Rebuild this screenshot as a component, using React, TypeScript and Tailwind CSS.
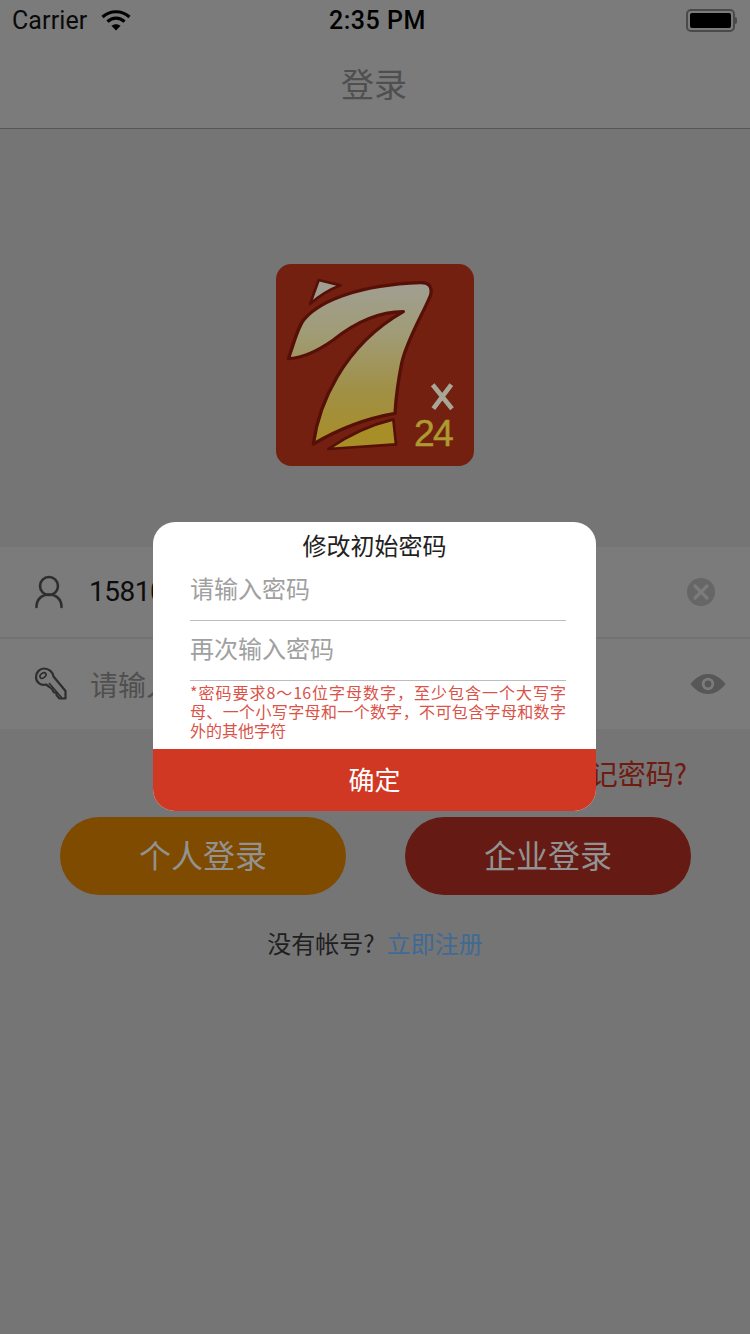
import React from "react";

const cjk = '"Noto Sans CJK SC", "Noto Sans", sans-serif';

function Logo() {
  return (
    <svg viewBox="48 42 594 606" className="w-[198px] h-[202px] block">
      <defs>
        <linearGradient id="seven" x1="0" y1="0" x2="0" y2="1">
          <stop offset="0" stopColor="#a09e92" />
          <stop offset="0.3" stopColor="#a09c78" />
          <stop offset="0.65" stopColor="#a09048" />
          <stop offset="1" stopColor="#a88e26" />
        </linearGradient>
      </defs>
      <rect x="48" y="42" width="594" height="606" rx="46" fill="#732010" />
      <path
        d="M85 326 C105 270 115 225 135 205 C185 150 300 105 480 98 C505 97 518 108 512 135 C490 190 440 270 425 340 C415 390 408 440 405 490 C320 505 230 540 160 582 C175 470 245 290 430 185 C340 185 270 230 220 270 C170 305 125 325 85 326 Z"
        fill="url(#seven)"
        stroke="#571008"
        strokeWidth="10"
        strokeLinejoin="round"
      />
      <path d="M176 90 L242 106 C205 120 175 140 150 162 Z" fill="#a09e92" stroke="#571008" strokeWidth="8" strokeLinejoin="round" />
      <path d="M400 508 C330 525 265 555 205 597 L408 583 Z" fill="#a88e26" stroke="#571008" strokeWidth="8" strokeLinejoin="round" />
      <path d="M518 404 L576 476 M574 404 L520 476" stroke="#a8a696" strokeWidth="14" fill="none" />
      <text x="462" y="589" fontFamily='"Liberation Sans", sans-serif' fontSize="112" letterSpacing="-5" stroke="#ad9a30" strokeWidth="1.5" fill="#ad9a30">24</text>
    </svg>
  );
}

function UserIcon() {
  return (
    <svg viewBox="0 0 30 34" className="w-[30px] h-[34px]" fill="none" stroke="#2e2e2e" strokeWidth="2.6" strokeLinecap="round">
      <circle cx="15" cy="11" r="9" />
      <path d="M2.5 32 C2.5 24 8 19.5 15 19.5 C22 19.5 27.5 24 27.5 32" />
    </svg>
  );
}

function KeyIcon() {
  return (
    <svg viewBox="0 0 34 34" className="w-[34px] h-[34px]" fill="none" stroke="#2e2e2e" strokeWidth="2.2" strokeLinejoin="round">
      <path d="M3 10 C3 5 7 1.5 11 1.5 C16 1.5 20 5 20.5 9.5 L32.5 24 L32.5 31.5 L26.5 31.5 L23.5 28 L23.5 25.5 L21 25.5 L19 22 L16.5 20 L13 17.5 C8 19 3 15.5 3 10 Z" />
      <ellipse cx="10" cy="8.5" rx="3.4" ry="2.2" transform="rotate(-35 10 8.5)" strokeWidth="1.6" />
      <path d="M16 16 L29 31" strokeWidth="1.6" />
    </svg>
  );
}

function ClearIcon() {
  return (
    <svg viewBox="0 0 28 28" className="w-7 h-7">
      <circle cx="14" cy="14" r="14" fill="#666666" />
      <path d="M8 8 L20 20 M20 8 L8 20" stroke="#7b7b7b" strokeWidth="3.2" strokeLinecap="round" />
    </svg>
  );
}

function EyeIcon() {
  return (
    <svg viewBox="0 0 36 20" className="w-9 h-5">
      <path d="M0.5 10 C6 3 12 0 18 0 C24 0 30 3 35.5 10 C30 17 24 20 18 20 C12 20 6 17 0.5 10 Z" fill="#575757" />
      <circle cx="18" cy="10" r="6.2" fill="#7b7b7b" />
      <circle cx="18" cy="10" r="3.4" fill="#575757" />
    </svg>
  );
}

function WifiIcon() {
  return (
    <svg viewBox="0 0 30 22" className="w-[30px] h-[22px]" fill="none" stroke="#000" strokeWidth="3.2">
      <path d="M1.5 8 C9 1 21 1 28.5 8" />
      <path d="M6.5 12.6 C11.5 8 18.5 8 23.5 12.6" />
      <path d="M15 21.5 L10.4 16.8 C13 14.6 17 14.6 19.6 16.8 Z" fill="#000" stroke="none" />
    </svg>
  );
}

function Battery() {
  return (
    <div className="flex items-center">
      <div className="w-[49px] h-[23px] rounded-[5px] border-2 border-[#4a4a4a] p-[2px]">
        <div className="w-full h-full rounded-[2px] bg-black" />
      </div>
      <div className="w-[2px] h-[7px] bg-[#4a4a4a] rounded-r-sm" />
    </div>
  );
}

export default function App() {
  return (
    <div className="relative w-[750px] h-[1334px] overflow-hidden bg-[#757575]" style={{ fontFamily: cjk }}>
      <header className="bg-[#7b7b7b] border-b border-[#555555]">
        <div className="relative h-10 flex items-center justify-between pl-3 pr-[13px] text-black">
          <div className="flex items-center gap-[14px]">
            <span className="text-[25px] leading-none font-['Roboto'] text-[#0a0a0a] tracking-[0.1px]">Carrier</span>
            <WifiIcon />
          </div>
          <span className="absolute left-[329px] top-[8px] text-[25px] leading-none font-['Roboto'] font-medium tracking-[0.5px]">2:35 PM</span>
          <Battery />
        </div>
        <div className="h-[88px] flex items-center justify-center pb-[1px] pr-[2px]">
          <span className="text-[33px] leading-none text-[#4f4f4f]">登录</span>
        </div>
      </header>

      <main>
        <div className="flex justify-center pt-[135px] pb-[81px]">
          <Logo />
        </div>

        <section className="bg-[#7b7b7b]">
          <div className="h-[92px] flex items-center pl-[34px] pr-[35px] border-b-2 border-[#727272]">
            <UserIcon />
            <span className="ml-[25px] text-[28px] tracking-[-0.5px] leading-none text-[#0c0c0c] font-['Roboto']">15810000000</span>
            <div className="ml-auto"><ClearIcon /></div>
          </div>
          <div className="h-[90px] flex items-center pl-[33px] pr-[24px]">
            <KeyIcon />
            <span className="ml-[23px] text-[28px] leading-none text-[#4f4f4f]">请输入密码</span>
            <div className="ml-auto"><EyeIcon /></div>
          </div>
        </section>

        <div className="flex justify-end pr-[63px] pt-[30px] h-[88px]">
          <span className="text-[28px] leading-none text-[#701a10]">忘记密码?</span>
        </div>

        <div className="flex pl-[60px] gap-[59px]">
          <button className="w-[286px] h-[78px] pb-[4px] rounded-full bg-[#7f4b00] text-[32px] text-[#929292] leading-none">个人登录</button>
          <button className="w-[286px] h-[78px] pb-[4px] rounded-full bg-[#651b13] text-[32px] text-[#929292] leading-none">企业登录</button>
        </div>

        <div className="flex justify-center pt-[36px] text-[24px] leading-none">
          <span className="text-[#1f1f1f]">没有帐号?</span>
          <span className="text-[#3f6a94] ml-[12px]">立即注册</span>
        </div>
      </main>

      <div className="absolute left-[153px] top-[522px] w-[443px] h-[289px] rounded-[22px] overflow-hidden bg-white flex flex-col">
        <div className="h-[46px] flex items-center justify-center text-[24px] leading-none text-[#222222]">修改初始密码</div>
        <div className="pl-[37px] pr-[30px]">
          <div className="h-[53px] border-b border-[#bdbdbd] text-[24px] leading-none text-[#a0a0a0] pt-[8px]">请输入密码</div>
          <div className="h-[60px] border-b border-[#bdbdbd] text-[24px] leading-none text-[#a0a0a0] pt-[15px]">再次输入密码</div>
          <p className="mt-[2px] text-[16px] leading-[19px] text-[#da5248] text-justify">
            *密码要求8～16位字母数字，至少包含一个大写字母、一个小写字母和一个数字，不可包含字母和数字外的其他字符
          </p>
        </div>
        <div className="mt-auto h-[62px] pb-[2px] bg-[#d03823] flex items-center justify-center text-[26px] leading-none text-white">确定</div>
      </div>
    </div>
  );
}
